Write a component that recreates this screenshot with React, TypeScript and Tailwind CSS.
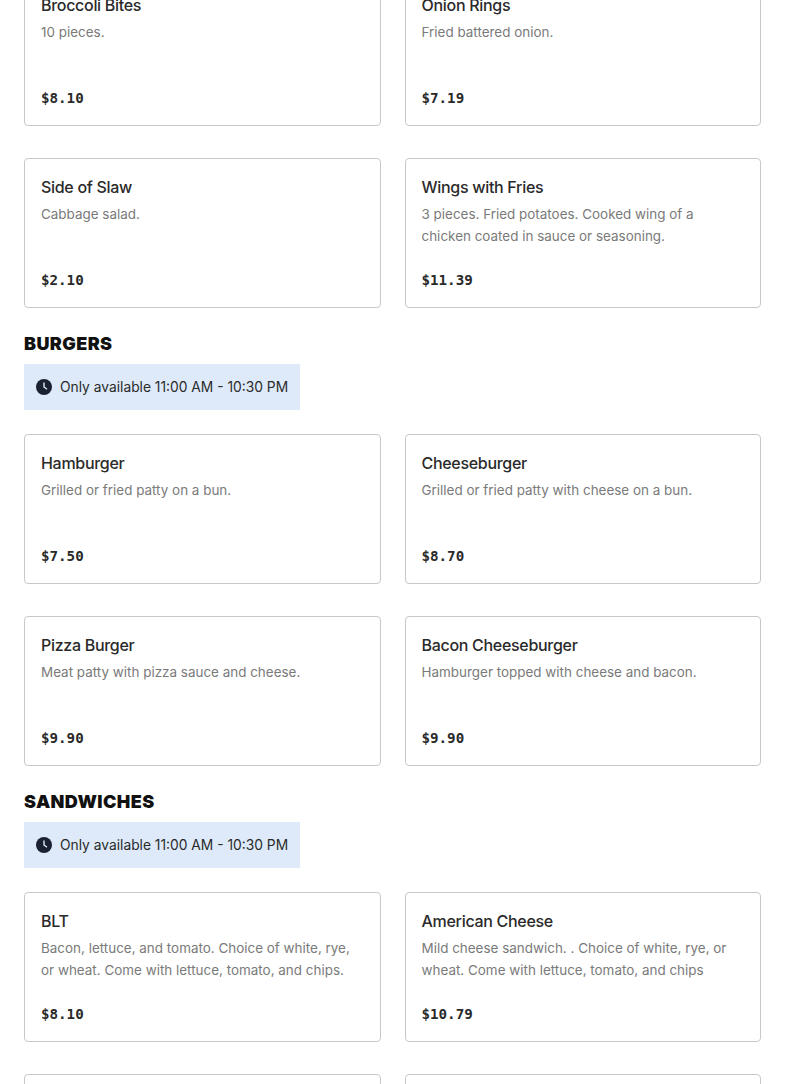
type Item = { name: string; desc: string; price: string }

const sides: Item[] = [
  { name: 'Broccoli Bites', desc: '10 pieces.', price: '$8.10' },
  { name: 'Onion Rings', desc: 'Fried battered onion.', price: '$7.19' },
  { name: 'Side of Slaw', desc: 'Cabbage salad.', price: '$2.10' },
  { name: 'Wings with Fries', desc: '3 pieces. Fried potatoes. Cooked wing of a chicken coated in sauce or seasoning.', price: '$11.39' },
]

const burgers: Item[] = [
  { name: 'Hamburger', desc: 'Grilled or fried patty on a bun.', price: '$7.50' },
  { name: 'Cheeseburger', desc: 'Grilled or fried patty with cheese on a bun.', price: '$8.70' },
  { name: 'Pizza Burger', desc: 'Meat patty with pizza sauce and cheese.', price: '$9.90' },
  { name: 'Bacon Cheeseburger', desc: 'Hamburger topped with cheese and bacon.', price: '$9.90' },
]

// last row only peeks in at the bottom edge, text is off screen
const sandwiches: Item[] = [
  { name: 'BLT', desc: 'Bacon, lettuce, and tomato. Choice of white, rye, or wheat. Come with lettuce, tomato, and chips.', price: '$8.10' },
  { name: 'American Cheese', desc: 'Mild cheese sandwich. . Choice of white, rye, or wheat. Come with lettuce, tomato, and chips', price: '$10.79' },
  { name: '', desc: '', price: '' },
  { name: ' ', desc: '', price: '' },
]

function ClockIcon() {
  return (
    <svg width="16" height="16" viewBox="0 0 16 16" className="shrink-0">
      <circle cx="8" cy="8" r="8" fill="#1a2130" />
      <path d="M8 3.5V8l3 2.2" fill="none" stroke="#deeafa" strokeWidth="1.4" />
    </svg>
  )
}

function Card({ item }: { item: Item }) {
  return (
    <div className="h-[150px] rounded-[4px] border border-[#c8c8c8] bg-white px-4 pt-[16px]">
      <h3 className="text-[16px] font-medium leading-[24px] tracking-[-0.3px] text-[#2a2a2a]">{item.name}</h3>
      <p className="mt-[4px] h-[44px] text-[13.45px] leading-[22px] text-[#7a7a7a]">{item.desc}</p>
      <p className="mt-[23px] font-['DejaVu_Sans_Mono',monospace] text-[14.2px] font-bold leading-[20px] text-[#2a2a2a]">{item.price}</p>
    </div>
  )
}

function Grid({ items }: { items: Item[] }) {
  return (
    <div className="grid grid-cols-2 gap-x-6 gap-y-8">
      {items.map((item) => (
        <Card key={item.name} item={item} />
      ))}
    </div>
  )
}

function Section({ title, items }: { title: string; items: Item[] }) {
  return (
    <section className="mt-[24px]">
      <h2 className="text-[18px] font-black leading-[24px] tracking-[0.4px] text-[#111111]">{title}</h2>
      <div className="mt-[8px] flex h-[46px] w-[276px] items-center gap-2 bg-[#deeafa] px-3 text-[13.8px] whitespace-nowrap text-[#2a2a2a]">
        <ClockIcon />
        <span>Only available 11:00 AM - 10:30 PM</span>
      </div>
      <div className="mt-6">
        <Grid items={items} />
      </div>
    </section>
  )
}

export default function App() {
  return (
    <div className="h-[1084px] overflow-hidden bg-white font-['Inter',sans-serif]">
      <div className="-mt-[24px] px-6">
        <Grid items={sides} />
        <Section title="BURGERS" items={burgers} />
        <Section title="SANDWICHES" items={sandwiches} />
      </div>
    </div>
  )
}
